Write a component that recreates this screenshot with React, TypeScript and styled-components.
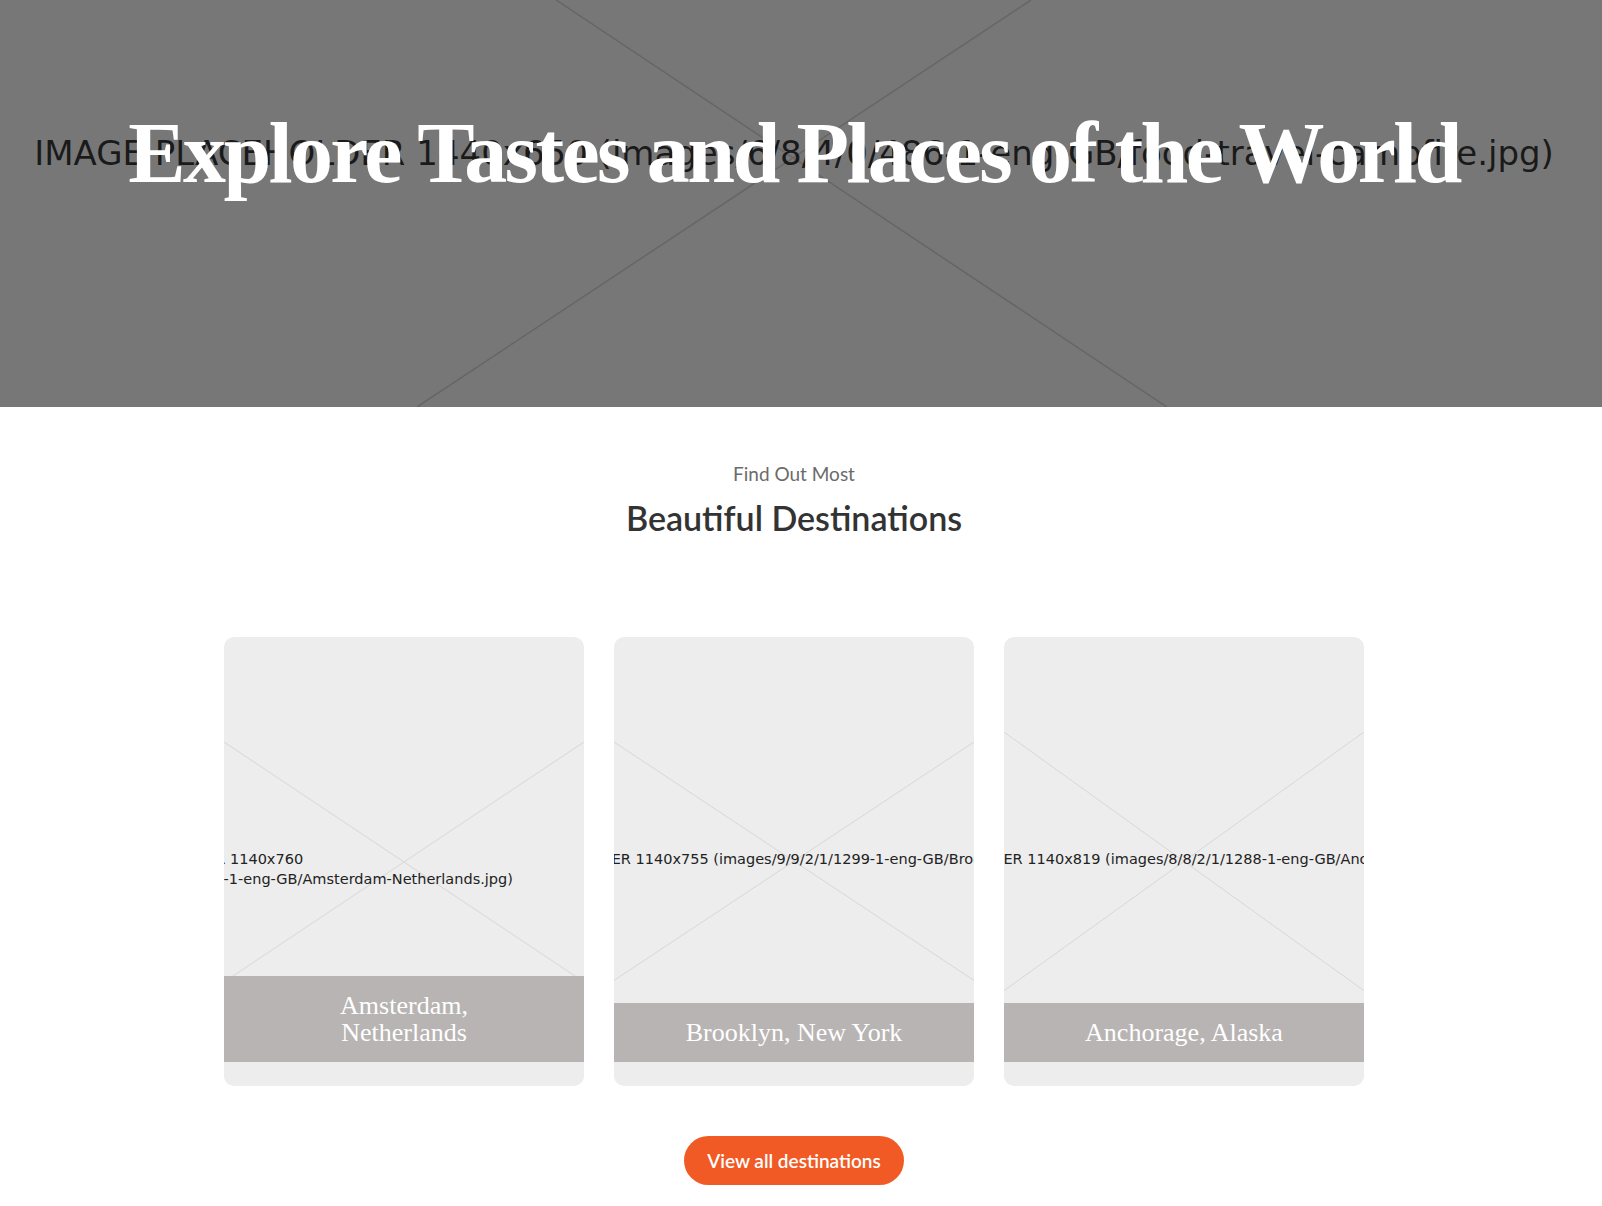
import React from "react";
import styled, { createGlobalStyle } from "styled-components";

const GlobalStyle = createGlobalStyle`
  html, body {
    margin: 0;
    padding: 0;
    background: #ffffff;
  }
  body {
    font-family: Lato, "Liberation Sans", sans-serif;
  }
  * {
    box-sizing: border-box;
  }
`;

const Page = styled.div`
  width: 100%;
  min-height: 100vh;
`;

// hero, a placeholder picture with the headline over it
const Hero = styled.header`
  display: grid;
  grid-template: minmax(0, 1fr) / minmax(0, 1fr);
  height: 407px;
  background-color: #777777;
  overflow: hidden;
`;

const HeroArt = styled.svg`
  grid-area: 1 / 1;
  width: 100%;
  height: 100%;
`;

const HeroLayer = styled.div`
  grid-area: 1 / 1;
  display: grid;
  grid-template: minmax(0, 1fr) / minmax(0, 1fr);
  place-items: center;
  padding: 0 14px 101px 0;
`;

const HeroLabel = styled.div`
  grid-area: 1 / 1;
  font-family: "DejaVu Sans", sans-serif;
  font-size: 34px;
  line-height: 40px;
  color: rgba(0, 0, 0, 0.78);
  white-space: nowrap;
`;

const HeroTitle = styled.h1`
  grid-area: 1 / 1;
  margin: 0;
  font-family: "Liberation Serif", "Times New Roman", serif;
  font-weight: 700;
  font-size: 86px;
  line-height: 1;
  letter-spacing: -2.6px;
  color: #ffffff;
  white-space: nowrap;
`;

const Destinations = styled.section`
  display: flex;
  flex-direction: column;
  align-items: center;
  padding: 55px 14px 40px 0;
`;

const Eyebrow = styled.p`
  margin: 0;
  font-size: 19px;
  line-height: 23px;
  color: #6b6b6b;
`;

const Heading = styled.h2`
  margin: 12px 0 0;
  font-size: 34px;
  line-height: 41px;
  font-weight: 600;
  color: #333333;
`;

const CardRow = styled.div`
  display: grid;
  grid-template-columns: repeat(3, 360px);
  gap: 30px;
  margin-top: 99px;
`;

const Card = styled.article`
  display: grid;
  grid-template: minmax(0, 1fr) / minmax(0, 1fr);
  height: 449px;
  border-radius: 10px;
  overflow: hidden;
  background-color: #ededed;
`;

const CardArt = styled.svg`
  grid-area: 1 / 1;
  align-self: center;
  width: 360px;
  display: block;
`;

// the placeholder text is wider than the card and gets clipped by it
const LabelTrack = styled.div`
  grid-area: 1 / 1;
  align-self: start;
  display: flex;
  justify-content: center;
  width: 674px;
  margin: 212px 0 0 -157px;
`;

const CardLabel = styled.div<{ $fill: boolean }>`
  flex: ${(p) => (p.$fill ? "1 1 auto" : "0 0 auto")};
  font-family: "DejaVu Sans", sans-serif;
  font-size: 14.5px;
  line-height: 20px;
  color: #222222;
  text-align: left;
  white-space: pre;
`;

const Caption = styled.h3`
  grid-area: 1 / 1;
  align-self: end;
  margin: 0 0 24px;
  padding: 16px 60px;
  background-color: #b8b4b3;
  font-family: "Liberation Serif", "Times New Roman", serif;
  font-weight: 400;
  font-size: 26px;
  line-height: 27px;
  color: #ffffff;
  text-align: center;
`;

const ViewAll = styled.button`
  margin-top: 50px;
  height: 49px;
  padding: 0 23px;
  border: none;
  border-radius: 25px;
  background-color: #f15a24;
  font-family: Lato, "Liberation Sans", sans-serif;
  font-size: 19px;
  font-weight: 600;
  color: #ffffff;
  cursor: pointer;
`;

type Destination = {
  name: string;
  label: string;
  w: number;
  h: number;
};

const destinations: Destination[] = [
  {
    name: "Amsterdam, Netherlands",
    label:
      "IMAGE PLACEHOLDER 1140x760\n(images/1/9/2/1/1291-1-eng-GB/Amsterdam-Netherlands.jpg)",
    w: 1140,
    h: 760,
  },
  {
    name: "Brooklyn, New York",
    label:
      "IMAGE PLACEHOLDER 1140x755 (images/9/9/2/1/1299-1-eng-GB/Brooklyn-New-York.jpg)",
    w: 1140,
    h: 755,
  },
  {
    name: "Anchorage, Alaska",
    label:
      "IMAGE PLACEHOLDER 1140x819 (images/8/8/2/1/1288-1-eng-GB/Anchorage-Alaska.jpg)",
    w: 1140,
    h: 819,
  },
];

function Placeholder({ w, h }: { w: number; h: number }) {
  return (
    <CardArt viewBox={`0 0 ${w} ${h}`}>
      <line x1={0} y1={0} x2={w} y2={h} stroke="#d6d6d6" strokeWidth={3} />
      <line x1={w} y1={0} x2={0} y2={h} stroke="#d6d6d6" strokeWidth={3} />
    </CardArt>
  );
}

function App() {
  return (
    <Page>
      <GlobalStyle />
      <Hero>
        <HeroArt viewBox="0 0 1602 407" preserveAspectRatio="none">
          <line x1={556} y1={0} x2={1167} y2={407} stroke="#666666" strokeWidth={1.5} />
          <line x1={1031} y1={0} x2={417} y2={407} stroke="#666666" strokeWidth={1.5} />
        </HeroArt>
        <HeroLayer>
          <HeroLabel>
            IMAGE PLACEHOLDER 1440x650 (images/6/8/4/0/486-1-eng-GB/food-travel-campfire.jpg)
          </HeroLabel>
          <HeroTitle>Explore Tastes and Places of the World</HeroTitle>
        </HeroLayer>
      </Hero>

      <Destinations>
        <Eyebrow>Find Out Most</Eyebrow>
        <Heading>Beautiful Destinations</Heading>
        <CardRow>
          {destinations.map((d) => (
            <Card key={d.name}>
              <Placeholder w={d.w} h={d.h} />
              <LabelTrack>
                <CardLabel $fill={d.label.includes("\n")}>{d.label}</CardLabel>
              </LabelTrack>
              <Caption>{d.name}</Caption>
            </Card>
          ))}
        </CardRow>
        <ViewAll>View all destinations</ViewAll>
      </Destinations>
    </Page>
  );
}

export default App;
